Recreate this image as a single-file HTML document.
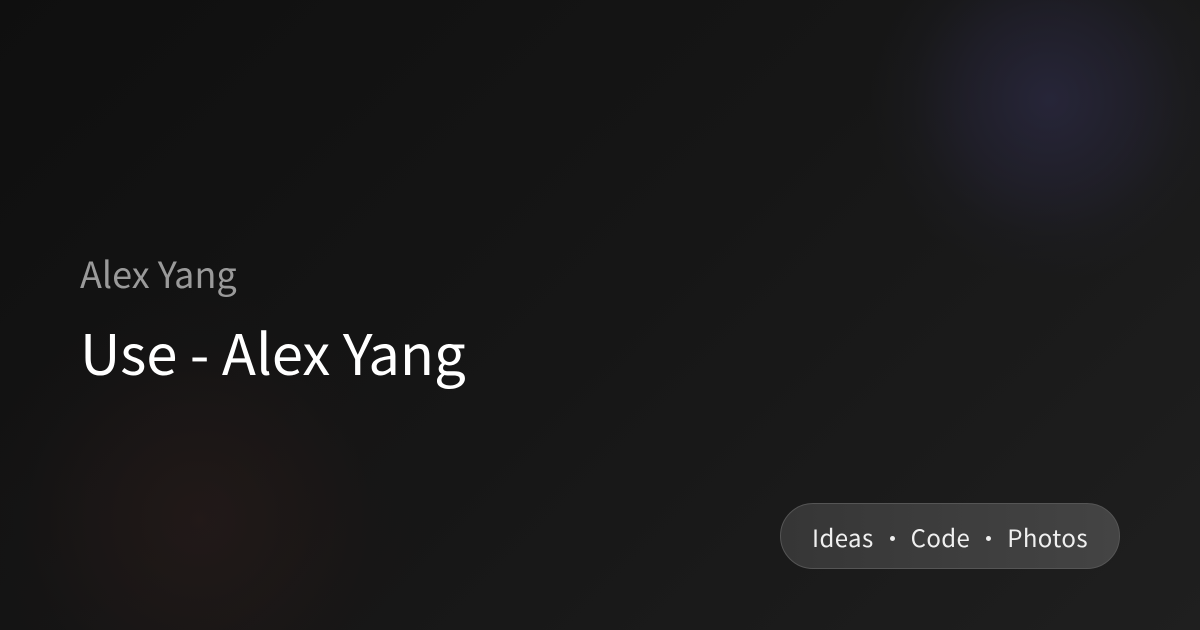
<!DOCTYPE html>
<html><head><meta charset="utf-8"><style>
html,body{margin:0;padding:0;width:1200px;height:630px;overflow:hidden}
body{position:relative;font-family:"Noto Sans CJK SC","Liberation Sans",sans-serif;
background:
radial-gradient(circle 180px at 1050px 100px,rgba(48,46,78,.6) 0%,rgba(40,38,60,.45) 48%,rgba(32,32,42,.25) 76%,rgba(30,30,40,0) 100%),
radial-gradient(circle 230px at 200px 520px,rgba(42,28,26,.6) 0%,rgba(35,25,24,.4) 48%,rgba(26,22,22,.2) 76%,rgba(20,20,20,0) 100%),
linear-gradient(135deg,#0f0f0f 0%,#161616 50%,#1f1f1f 100%);}
.sub{position:absolute;left:80px;top:248px;font-size:36px;color:#9a9a9a;line-height:50px}
.title{position:absolute;left:80px;top:314px;font-size:56px;color:#fff;line-height:76px}
.pill{position:absolute;left:780px;top:503px;width:340px;height:66px;box-sizing:border-box;border-radius:33px;background:linear-gradient(90deg,#363636,#444);border:1px solid #555;color:#f0f0f0;font-size:24px;letter-spacing:0.4px;display:flex;align-items:center;justify-content:center}
.dot{display:inline-block;width:5px;height:5px;border-radius:50%;background:#eee;margin:0 16px;position:relative;top:2px}
</style></head><body>
<div class="sub">Alex Yang</div>
<div class="title">Use - Alex Yang</div>
<div class="pill"><span>Ideas</span><span class="dot"></span><span>Code</span><span class="dot"></span><span>Photos</span></div>
</body></html>
